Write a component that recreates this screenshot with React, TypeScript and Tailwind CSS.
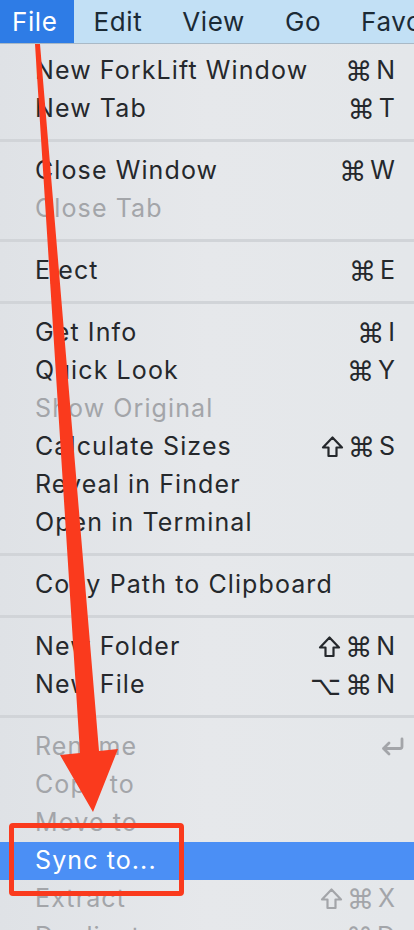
import React from "react";

type Item = {
  label: string;
  keys?: string;
  disabled?: boolean;
  active?: boolean;
  returnKey?: boolean;
};

const groups: Item[][] = [
  [
    { label: "New ForkLift Window", keys: "⌘N" },
    { label: "New Tab", keys: "⌘T" },
  ],
  [
    { label: "Close Window", keys: "⌘W" },
    { label: "Close Tab", disabled: true },
  ],
  [{ label: "Eject", keys: "⌘E" }],
  [
    { label: "Get Info", keys: "⌘I" },
    { label: "Quick Look", keys: "⌘Y" },
    { label: "Show Original", disabled: true },
    { label: "Calculate Sizes", keys: "⇧⌘S" },
    { label: "Reveal in Finder" },
    { label: "Open in Terminal" },
  ],
  [{ label: "Copy Path to Clipboard" }],
  [
    { label: "New Folder", keys: "⇧⌘N" },
    { label: "New File", keys: "⌥⌘N" },
  ],
  [
    { label: "Rename", disabled: true, returnKey: true },
    { label: "Copy to", disabled: true },
    { label: "Move to", disabled: true },
    { label: "Sync to...", active: true },
    { label: "Extract", keys: "⇧⌘X", disabled: true },
    { label: "Duplicate", keys: "⌘D", disabled: true },
  ],
];

function ReturnGlyph() {
  return (
    <svg width="26" height="20" viewBox="0 0 26 20" className="mr-[-10px]">
      <path
        d="M23 2v7.5a2 2 0 0 1-2 2H5"
        fill="none"
        stroke="currentColor"
        strokeWidth="2.8"
        strokeLinecap="round"
      />
      <path
        d="M10 6L4.5 11.5L10 17"
        fill="none"
        stroke="currentColor"
        strokeWidth="2.8"
        strokeLinecap="round"
        strokeLinejoin="round"
      />
    </svg>
  );
}

function ShiftGlyph() {
  return (
    <svg width="23" height="24" viewBox="0 0 23 24">
      <path
        d="M11.5 2.5L21 12.5H15.5V21H7.5V12.5H2Z"
        fill="none"
        stroke="currentColor"
        strokeWidth="2.2"
        strokeLinejoin="round"
      />
    </svg>
  );
}

function Key({ k }: { k: string }) {
  if (k === "⇧") return <ShiftGlyph />;
  if (k === "⌘" || k === "⌥")
    return <span className="font-['DejaVu_Sans',sans-serif] text-[27px] leading-none">{k}</span>;
  return <span>{k}</span>;
}

function Row({ item }: { item: Item }) {
  const color = item.active
    ? "bg-[#4b8ff5] text-white"
    : item.disabled
    ? "text-[#a3a5a9]"
    : "text-[#25282c]";
  return (
    <div className={`flex h-[38px] items-center justify-between pl-[35px] pr-[19px] ${color}`}>
      <span className="whitespace-nowrap">{item.label}</span>
      {item.keys && (
        <span className="flex items-center gap-[4px] tracking-normal">
          {item.keys.split("").map((k, i) => (
            <Key key={i} k={k} />
          ))}
        </span>
      )}
      {item.returnKey && <ReturnGlyph />}
    </div>
  );
}

export default function App() {
  return (
    <div className="relative h-[930px] w-[414px] overflow-hidden bg-[#e3e6ea] font-['Inter',sans-serif] text-[25px] tracking-[1.1px]">
      <header className="flex h-[44px] items-center border-b border-[#a9b9c6] bg-[#c2e0f5] text-[26px] tracking-[0.6px] text-[#1b2a35]">
        <div className="flex h-full items-center bg-[#2e7ce6] pl-3 pr-4 text-white">File</div>
        <div className="px-5">Edit</div>
        <div className="px-5">View</div>
        <div className="px-5">Go</div>
        <div className="pl-5 whitespace-nowrap">Favo</div>
      </header>

      <div className="bg-gradient-to-r from-[#dfe2e6] via-[#e6e8eb] to-[#e4e7ea] pt-[8px]">
        {groups.map((g, gi) => (
          <div key={gi}>
            {gi > 0 && (
              <div className="pt-[11px] pb-[10px]">
                <div className="h-[3px] bg-[#d1d4d8]" />
              </div>
            )}
            {g.map((item) => (
              <Row key={item.label} item={item} />
            ))}
          </div>
        ))}
      </div>

      {/* annotation overlay */}
      <svg className="pointer-events-none absolute left-0 top-0" width="414" height="930">
        <polygon
          points="35,44 40,44 99,751 118,749 93,812 60,755 80,753"
          fill="#fa3a1d"
        />
      </svg>
      <div className="pointer-events-none absolute left-[9px] top-[823px] h-[73px] w-[175px] rounded-[4px] border-[5px] border-[#fa3a1d]" />
    </div>
  );
}
